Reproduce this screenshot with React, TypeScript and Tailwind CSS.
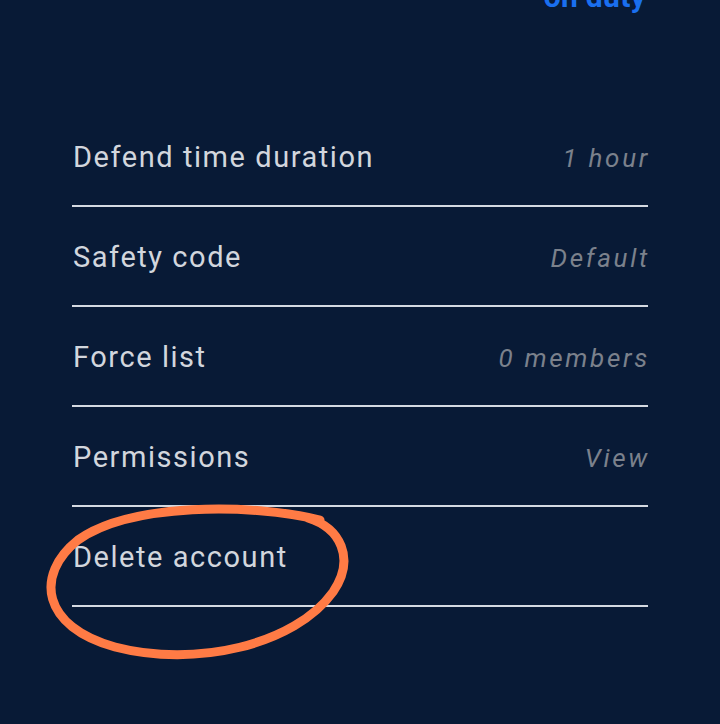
import React from 'react';

const rows = [
    { label: 'Defend time duration', value: '1 hour' },
    { label: 'Safety code', value: 'Default' },
    { label: 'Force list', value: '0 members' },
    { label: 'Permissions', value: 'View' },
    { label: 'Delete account', value: '' },
];

const App: React.FC = () => {
    return (
        <div
            className="relative w-[720px] h-[724px] overflow-hidden bg-[#081a36]"
            style={{ fontFamily: 'Roboto, "Noto Sans", sans-serif' }}
        >
            {/* Status header, cut off at the top */}
            <div className="flex justify-end px-[74px] -mt-[21px]">
                <span className="text-[30px] leading-[36px] font-bold text-[#1a6fef] tracking-[0.3px]">on duty</span>
            </div>

            {/* Settings list */}
            <div className="mt-[92px] px-[72px]">
                {rows.map((row) => (
                    <div
                        key={row.label}
                        className="h-[100px] pt-[4px] flex items-center justify-between border-b-2 border-[#d4d9e1]"
                    >
                        <span className="text-[29px] text-[#d2d6dd] tracking-[1.55px] pl-[1px]">{row.label}</span>
                        {row.value && (
                            <span className="text-[26px] italic text-[#7b818c] tracking-[2.7px] -mr-[2px]">{row.value}</span>
                        )}
                    </div>
                ))}
            </div>

            {/* Hand-drawn highlight around "Delete account" */}
            <svg className="absolute inset-0 pointer-events-none" width="720" height="724" viewBox="0 0 720 724">
                <path
                    d="M 320 520 C 250 503, 130 503, 78 540 C 34 575, 42 627, 115 647 C 195 668, 295 645, 333 592 C 356 558, 340 528, 308 518"
                    fill="none"
                    stroke="#ff7b45"
                    strokeWidth="9"
                    strokeLinecap="round"
                    strokeLinejoin="round"
                />
            </svg>
        </div>
    );
};

export default App;
